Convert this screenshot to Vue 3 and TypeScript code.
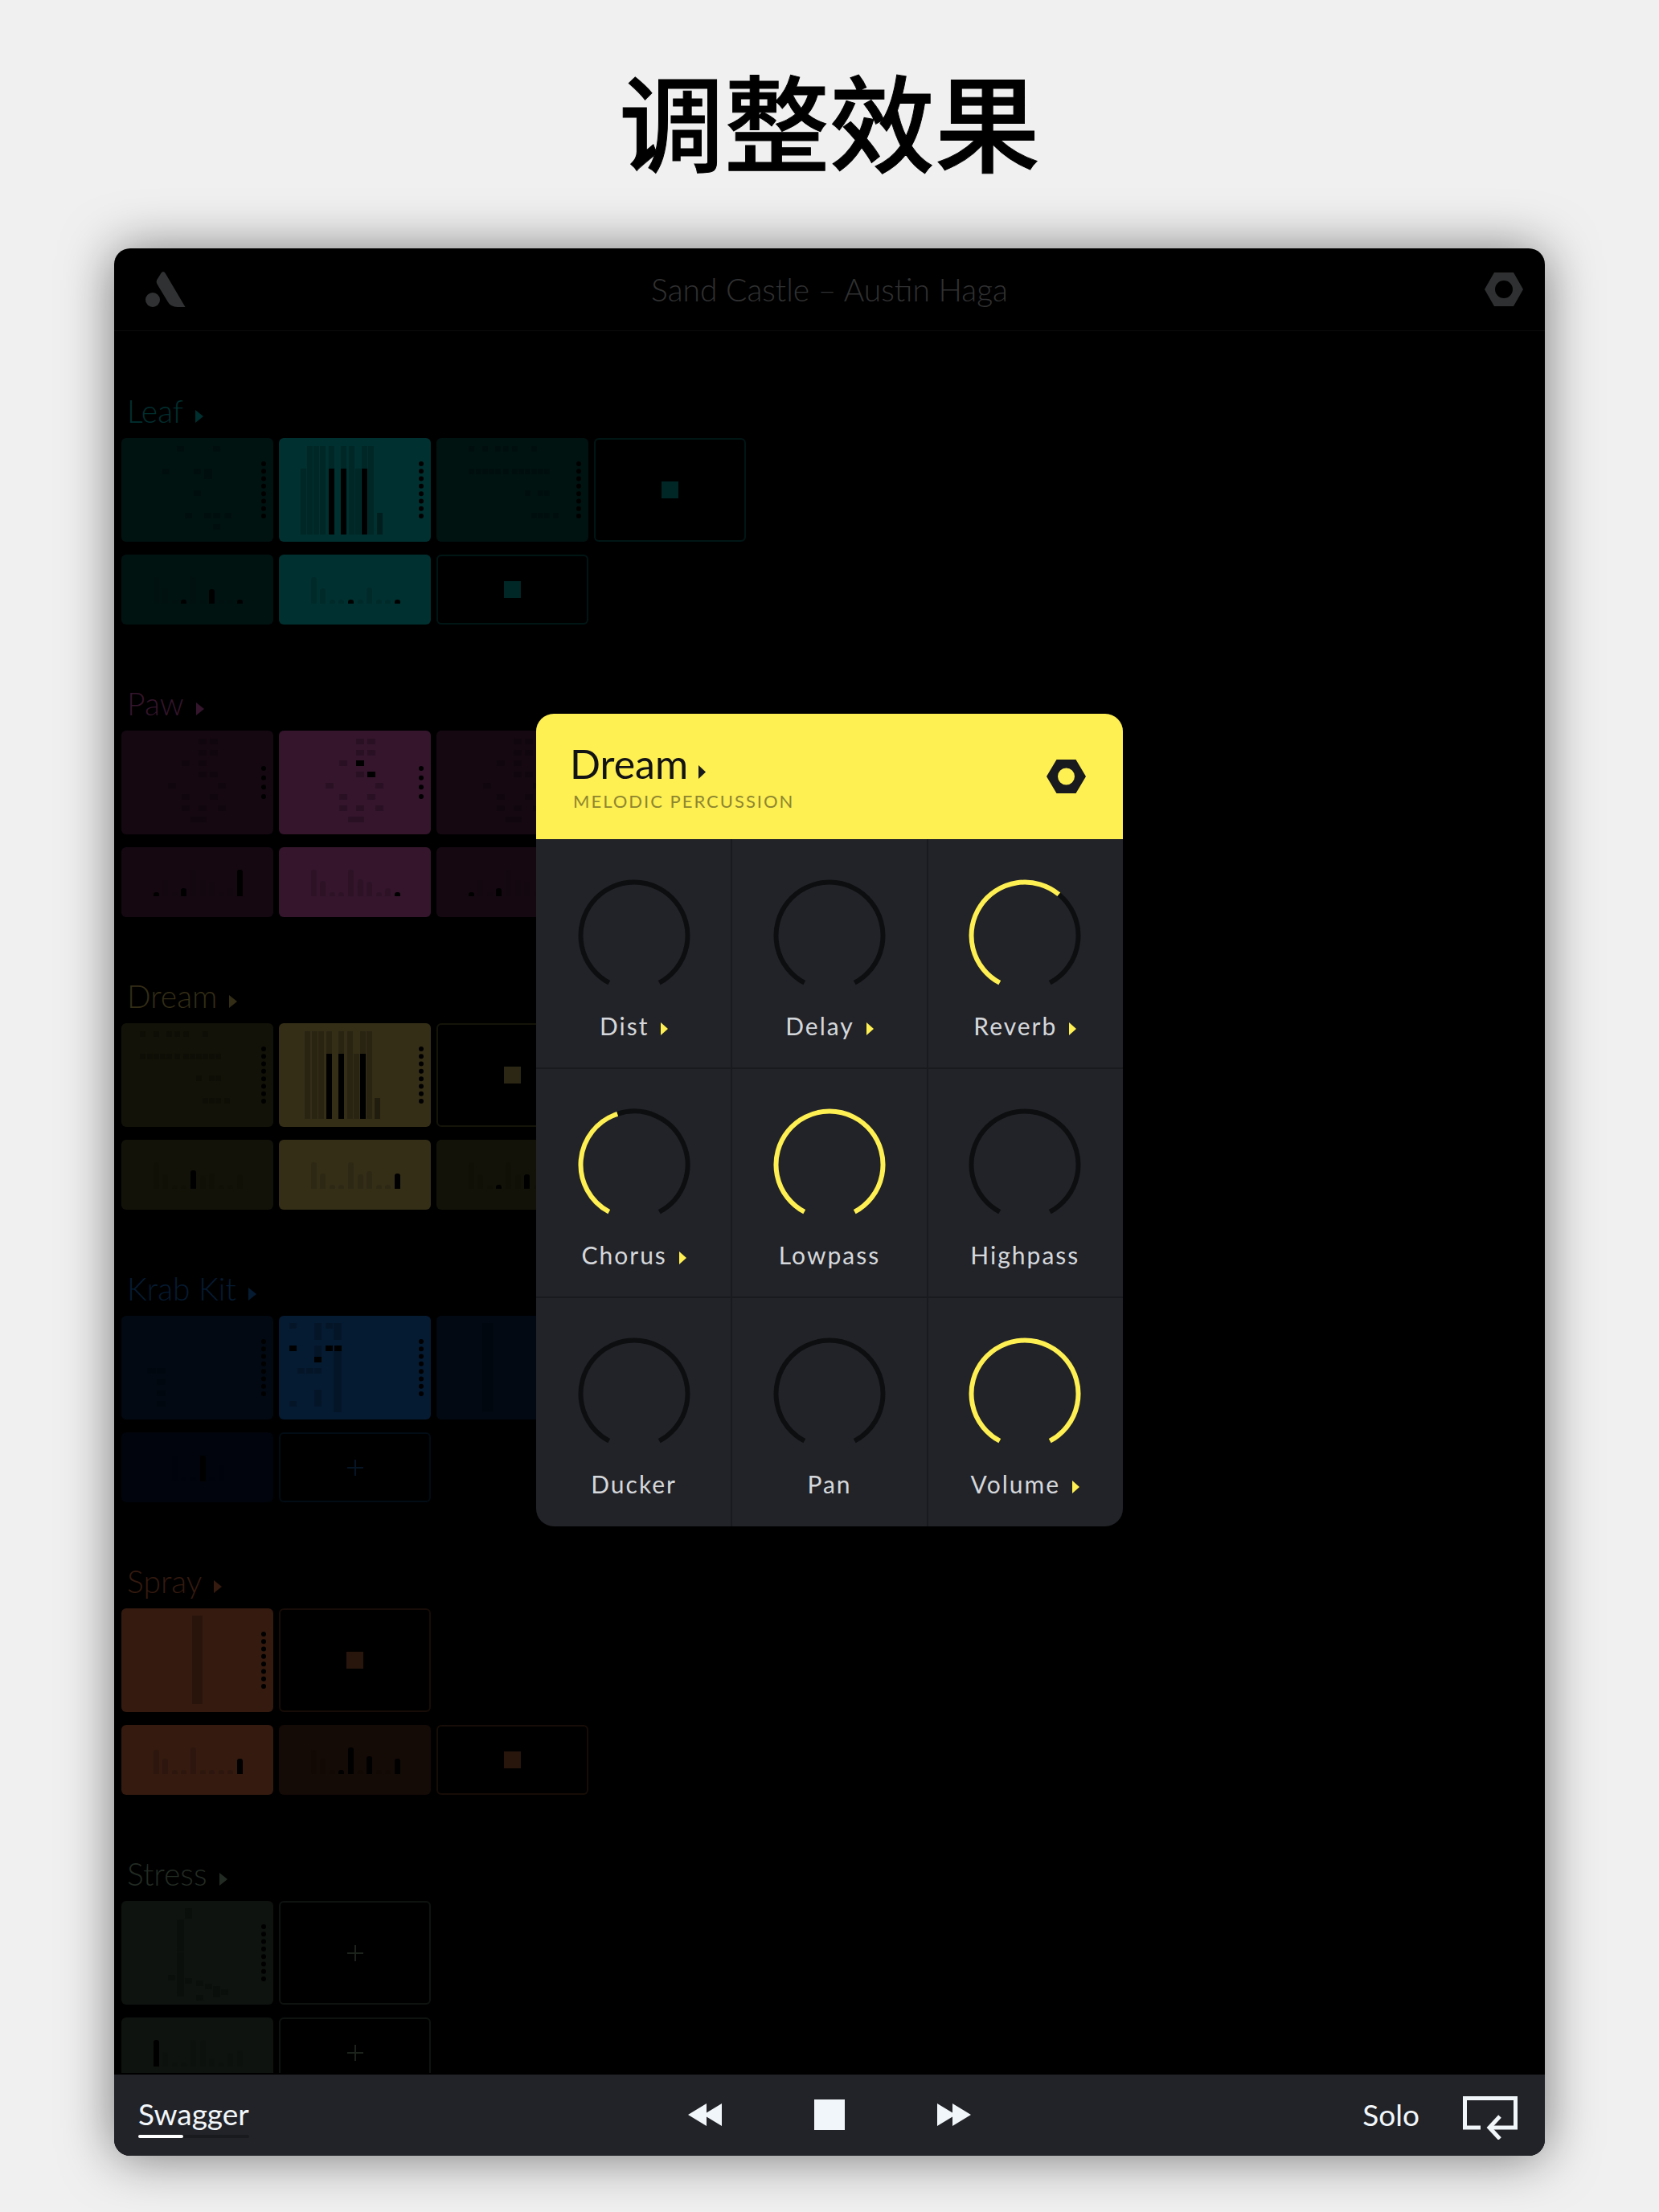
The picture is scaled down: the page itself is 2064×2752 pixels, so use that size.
<script setup lang="ts">
import { computed, ref } from 'vue'

// x, y, width, height, and an optional flag for a sounding note
type Note = [number, number, number, number, boolean?]

interface Clip {
  kind: 'notes' | 'levels' | 'stop' | 'add'
  on?: boolean
  notes?: Note[]
  dots?: number
  // bar heights; a negative height marks a bar that is sounding
  levels?: number[]
}

interface Track {
  name: string
  tone: string
  clips: Clip[]
  levels: Clip[]
}

interface Knob {
  name: string
  value: number
  automated?: boolean
}

const squares = (w: number, points: [number, number, boolean?][]): Note[] =>
  points.map(([x, y, hot]) => [x, y, w, 7, hot])

const notes = (items: Note[], on = false, dots = 8): Clip => ({ kind: 'notes', notes: items, on, dots })
const levels = (items: number[], on = false): Clip => ({ kind: 'levels', levels: items, on })
const stop: Clip = { kind: 'stop' }
const add: Clip = { kind: 'add' }

const arp = (shift: number): Note[] =>
  squares(7, [
    [23, 10], [40, 10], [56, 10], [66, 10], [77, 10], [101, 10],
    [23, 38], [32, 38], [40, 38], [48, 38], [56, 38], [66, 38],
    [77, 38], [85, 38], [93, 38], [101, 38], [109, 38], [117, 38],
    [93, 65], [109, 65], [117, 65],
    [101, 93], [109, 93], [117, 93], [128, 93],
  ]).map(([x, y, w, h]) => [x + shift, y, w, h])

const leafLead: Note[] = [
  ...squares(9, [
    [69, 10], [114, 10], [51, 38], [90, 38], [90, 65],
    [79, 93], [103, 93], [114, 93], [128, 93], [114, 107],
  ]),
  [103, 38, 10, 13],
]

const leafChords: Note[] = [
  [27, 38, 7, 82], [35, 10, 7, 110], [43, 10, 7, 110], [51, 10, 7, 110],
  [62, 10, 7, 28], [62, 38, 7, 82, true], [77, 10, 7, 28], [77, 38, 7, 82, true],
  [87, 10, 7, 110], [95, 38, 7, 82], [103, 10, 7, 28], [103, 38, 7, 82, true],
  [111, 10, 7, 110], [122, 93, 7, 27], [122, 93, 7, 27],
]

const dreamChords: Note[] = [
  [32, 10, 7, 109], [41, 10, 7, 109], [49, 10, 7, 109],
  [59, 10, 7, 28], [59, 38, 7, 81, true], [74, 10, 7, 28], [74, 38, 7, 81, true],
  [85, 10, 7, 109], [93, 38, 7, 81], [101, 10, 7, 28], [101, 38, 7, 81, true],
  [109, 10, 7, 109], [119, 93, 7, 26], [119, 93, 7, 26],
]

const paw = (hot: boolean): Note[] =>
  squares(10, [
    [96, 10], [110, 10], [96, 24], [110, 24], [75, 37], [96, 37, hot],
    [96, 51], [110, 51, hot], [58, 65], [120, 65], [75, 79], [110, 79],
    [75, 93], [96, 93], [120, 93], [86, 107], [96, 107],
  ])

const krabIntro = squares(11, [[32, 65], [44, 65], [44, 79], [44, 93], [44, 106]])

const krabBeat: Note[] = [
  ...squares(9, [
    [13, 9], [58, 9], [13, 37, true], [58, 37, true], [69, 37, true], [44, 51, true],
    [23, 65], [34, 65], [44, 65], [13, 106],
  ]),
  [44, 9, 9, 21], [68, 9, 10, 21], [44, 37, 9, 14], [68, 44, 10, 76], [44, 92, 9, 21],
]

const stressNotes: Note[] = [
  [79, 9, 9, 13], [69, 23, 9, 40], [69, 64, 9, 55], [114, 106, 9, 14],
  ...squares(9, [[58, 92], [79, 96], [93, 99], [104, 103], [124, 110], [93, 117]]),
]

const tracks: Track[] = [
  {
    name: 'Leaf',
    tone: 'leaf',
    clips: [notes(leafLead), notes(leafChords, true), notes(arp(17)), stop],
    levels: [
      levels([33, 19, 5, -5, 33, 5, -18, 5, 5, -5]),
      levels([33, 19, 5, 5, -5, 5, 20, 5, 5, -5], true),
      stop,
    ],
  },
  {
    name: 'Paw',
    tone: 'paw',
    clips: [notes(paw(false), false, 4), notes(paw(true), true, 4), notes(paw(false), false, 4)],
    levels: [
      levels([-5, 20, 5, -10, 33, 20, 18, 5, 10, -33]),
      levels([33, 19, 5, 5, 33, 21, 18, 5, 10, -5], true),
      levels([-5, 20, 5, -10, 33, 20, 18, 5, 10, -33]),
    ],
  },
  {
    name: 'Dream',
    tone: 'dream',
    clips: [notes(arp(0)), notes(dreamChords, true), stop],
    levels: [
      levels([33, 18, 5, 5, -23, 17, 20, 5, 5, 18]),
      levels([33, 19, 5, 5, 33, 18, 22, 5, 5, -19], true),
      levels([33, 18, 5, -5, 33, 18, -18, 5, 5, 5]),
    ],
  },
  {
    name: 'Krab Kit',
    tone: 'krab',
    clips: [notes(krabIntro), notes(krabBeat, true), notes([[57, 9, 13, 110]])],
    levels: [levels([0, 0, 32, 5, 5, -32, 5, 20, 0, 0]), add],
  },
  {
    name: 'Spray',
    tone: 'spray',
    clips: [notes([[88, 9, 13, 110]], true), stop],
    levels: [
      levels([30, 19, 5, 5, 33, 5, 5, 5, 5, -19], true),
      levels([30, 19, 5, -5, -33, 5, -22, 5, 5, -19]),
      stop,
    ],
  },
  {
    name: 'Stress',
    tone: 'stress',
    clips: [notes(stressNotes), add],
    levels: [levels([-33, 18, 5, 5, 33, 33, 10, 5, 17, 20]), add],
  },
]

const knobs = ref<Knob[]>([
  { name: 'Dist', value: 0, automated: true },
  { name: 'Delay', value: 0, automated: true },
  { name: 'Reverb', value: 63, automated: true },
  { name: 'Chorus', value: 44, automated: true },
  { name: 'Lowpass', value: 100 },
  { name: 'Highpass', value: 0 },
  { name: 'Ducker', value: 0 },
  { name: 'Pan', value: 0 },
  { name: 'Volume', value: 100, automated: true },
])

// The dial leaves a gap of 28 degrees on each side of its lowest point.
const RADIUS = 66.5
const point = (share: number): string => {
  const angle = ((28 + 304 * share) * Math.PI) / 180
  return `${(70 - RADIUS * Math.sin(angle)).toFixed(2)} ${(70 + RADIUS * Math.cos(angle)).toFixed(2)}`
}
const arc = (from: number, to: number): string =>
  `M${point(from)}A${RADIUS} ${RADIUS} 0 ${304 * (to - from) > 180 ? 1 : 0} 1 ${point(to)}`

const dials = computed(() =>
  knobs.value.map((k) => ({
    rest: k.value < 100 ? arc(k.value / 100, 1) : '',
    filled: k.value > 0 ? arc(0, k.value / 100) : '',
  })),
)

const barX = (i: number): number => Math.round(39.5 + 11.6 * i)
const dotY = (i: number, count: number): number =>
  count === 4 ? 47 + (35 * i) / 3 : 32 + (65 * i) / 7
</script>

<template>
  <div class="page">
    <h1 class="headline">调整效果</h1>

    <div class="device">
      <header class="topbar">
        <svg class="logo" width="50" height="44" viewBox="0 0 50 44" aria-hidden="true">
          <circle cx="9" cy="35" r="9" />
          <path d="M19 2.500Q20 0 22 0Q24 0 25 2.500L49.500 44H40Q31 44 27.500 37L14.500 15.500Q13 13 14 10.500Z" />
        </svg>
        <p class="song">Sand Castle – Austin Haga</p>
        <button class="plain nut" type="button" aria-label="Settings">
          <svg width="48" height="42" viewBox="0 0 48 42">
            <path fill-rule="evenodd" d="M12 0H36L48 21L36 42H12L0 21ZM24 10A11 11 0 1 0 24 32A11 11 0 1 0 24 10Z" />
          </svg>
        </button>
      </header>

      <main class="stage">
        <section v-for="t in tracks" :key="t.name" class="track" :class="t.tone">
          <h2 class="track-name">
            {{ t.name }}
            <svg class="arrow" width="10" height="16" viewBox="0 0 10 16" aria-hidden="true"><path d="M0 0L10 8L0 16Z" /></svg>
          </h2>
          <div class="row">
            <button
              v-for="(c, i) in t.clips"
              :key="i"
              type="button"
              class="clip tall"
              :class="[c.kind, { on: c.on }]"
              :aria-label="`${t.name} pattern ${i + 1}`"
            >
              <svg v-if="c.kind === 'notes'" width="189" height="129" viewBox="0 0 189 129">
                <rect
                  v-for="(n, k) in c.notes"
                  :key="k"
                  :x="n[0]"
                  :y="n[1]"
                  :width="n[2]"
                  :height="n[3]"
                  :class="n[4] ? 'hot' : 'cold'"
                />
                <circle v-for="d in c.dots" :key="'d' + d" cx="177" :cy="dotY(d - 1, c.dots ?? 8)" r="3" class="hot" />
              </svg>
              <svg v-else-if="c.kind === 'stop'" class="glyph" width="21" height="21" viewBox="0 0 21 21"><path d="M0 0H21V21H0Z" /></svg>
              <svg v-else class="glyph" width="20" height="20" viewBox="0 0 20 20"><path d="M9 0H11V9H20V11H11V20H9V11H0V9H9Z" /></svg>
            </button>
          </div>
          <div class="row">
            <button
              v-for="(c, i) in t.levels"
              :key="i"
              type="button"
              class="clip short"
              :class="[c.kind, { on: c.on }]"
              :aria-label="`${t.name} levels ${i + 1}`"
            >
              <svg v-if="c.kind === 'levels'" width="189" height="87" viewBox="0 0 189 87">
                <path
                  v-for="(h, k) in c.levels"
                  :key="k"
                  :d="h ? `M${barX(k)} 61v${3 - Math.abs(h)}q0 -3 3 -3h1q3 0 3 3v${Math.abs(h) - 3}z` : ''"
                  :class="h < 0 ? 'hot' : 'cold'"
                />
              </svg>
              <svg v-else-if="c.kind === 'stop'" class="glyph" width="21" height="21" viewBox="0 0 21 21"><path d="M0 0H21V21H0Z" /></svg>
              <svg v-else class="glyph" width="20" height="20" viewBox="0 0 20 20"><path d="M9 0H11V9H20V11H11V20H9V11H0V9H9Z" /></svg>
            </button>
          </div>
        </section>
      </main>

      <footer class="transport">
        <div class="scene">
          <button class="plain scene-name" type="button">Swagger</button>
          <div class="progress" role="progressbar" aria-label="Swagger" aria-valuenow="41"><i></i></div>
        </div>
        <div class="controls">
          <button class="plain" type="button" aria-label="Previous">
            <svg width="42" height="28" viewBox="0 0 42 28"><path d="M0 14L23 0V11.500L42 0V28L23 16.500V28Z" /></svg>
          </button>
          <button class="plain" type="button" aria-label="Stop">
            <svg width="38" height="38" viewBox="0 0 38 38"><path d="M0 0H38V38H0Z" /></svg>
          </button>
          <button class="plain" type="button" aria-label="Next">
            <svg width="42" height="28" viewBox="0 0 42 28"><path d="M42 14L19 0V11.500L0 0V28L19 16.500V28Z" /></svg>
          </button>
        </div>
        <div class="modes">
          <button class="plain" type="button">Solo</button>
          <button class="plain" type="button" aria-label="Loop">
            <svg class="loop" width="68" height="54" viewBox="0 0 68 54">
              <path d="M22 39H2.500V2.500H65.500V39H33" />
              <path d="M46 25L33 39L46 53" />
            </svg>
          </button>
        </div>
      </footer>

      <div class="overlay">
        <section class="panel" role="dialog" aria-label="Dream">
          <header class="panel-head">
            <div>
              <h2 class="panel-title">
                Dream
                <svg width="9" height="17" viewBox="0 0 9 17" aria-hidden="true"><path d="M0 0L9 8.500L0 17Z" /></svg>
              </h2>
              <p class="panel-kind">MELODIC PERCUSSION</p>
            </div>
            <button class="plain" type="button" aria-label="Instrument settings">
              <svg width="49" height="42" viewBox="0 0 49 42">
                <path fill-rule="evenodd" d="M12.500 0H36.500L49 21L36.500 42H12.500L0 21ZM24.500 10.500A10.500 10.500 0 1 0 24.500 31.500A10.500 10.500 0 1 0 24.500 10.500Z" />
              </svg>
            </button>
          </header>
          <div class="knobs">
            <label v-for="(k, i) in knobs" :key="k.name" class="knob">
              <span class="dial">
                <svg width="140" height="140" viewBox="0 0 140 140" aria-hidden="true">
                  <path v-if="dials[i].rest" class="rest" :d="dials[i].rest" />
                  <path v-if="dials[i].filled" class="filled" :d="dials[i].filled" />
                </svg>
                <input v-model.number="k.value" class="range" type="range" min="0" max="100" />
              </span>
              <span class="knob-name">
                {{ k.name }}
                <svg v-if="k.automated" width="9" height="16" viewBox="0 0 9 16" aria-hidden="true"><path d="M0 0L9 8L0 16Z" /></svg>
              </span>
            </label>
          </div>
        </section>
      </div>
    </div>
  </div>
</template>

<style>
body {
  margin: 0;
  background: #f0f0f0;
}
</style>

<style scoped>
.page {
  box-sizing: border-box;
  height: 100vh;
  padding: 67px 142px 70px;
  display: flex;
  flex-direction: column;
  font-family: Lato, 'Noto Sans CJK SC', sans-serif;
  background: #f0f0f0;
}

.page svg {
  display: block;
  flex: none;
}

h1,
h2,
p {
  margin: 0;
}

.plain {
  display: block;
  padding: 0;
  border: 0;
  background: none;
  font: inherit;
  color: inherit;
}

.headline {
  margin-bottom: 82px;
  font-family: 'Noto Sans CJK SC', sans-serif;
  font-size: 131px;
  font-weight: 500;
  line-height: 160px;
  text-align: center;
  color: #000;
  -webkit-text-stroke: 1px #000;
}

.device {
  position: relative;
  flex: 1;
  min-height: 0;
  display: flex;
  flex-direction: column;
  border-radius: 20px;
  background: #000;
  box-shadow: 0 2px 64px rgba(0, 0, 0, 0.5);
}

.topbar {
  box-sizing: border-box;
  height: 103px;
  padding: 0 27px;
  display: grid;
  grid-template-columns: 1fr auto 1fr;
  align-items: center;
  border-bottom: 1px solid #0c0c0d;
  color: #303132;
}

.logo {
  margin-left: 12px;
  fill: #303132;
}

.song {
  font-size: 39px;
  font-weight: 300;
  line-height: 48px;
}

.nut {
  justify-self: end;
  fill: #2f3031;
}

.stage {
  flex: 1;
  min-height: 0;
  margin-bottom: 2px;
  padding: 76px 9px 0;
  display: flex;
  flex-direction: column;
  gap: 75px;
  overflow: hidden;
}

.track {
  flex: none;
}

.track-name {
  display: flex;
  align-items: baseline;
  gap: 15px;
  margin-bottom: 11px;
  padding-left: 7px;
  font-size: 39px;
  font-weight: 300;
  line-height: 46px;
  color: var(--ink);
}

.arrow {
  margin-bottom: 2px;
  fill: var(--ink);
}

.row {
  display: flex;
  gap: 7px;
}

.row + .row {
  margin-top: 16px;
}

.clip {
  box-sizing: border-box;
  width: 189px;
  padding: 0;
  display: flex;
  align-items: center;
  justify-content: center;
  border: 0;
  border-radius: 6px;
  background: var(--dim);
}

.tall {
  height: 129px;
}

.short {
  height: 87px;
}

.on {
  background: var(--bright);
}

.stop,
.add {
  border: 2px solid var(--line);
  background: none;
}

.glyph {
  fill: var(--glyph);
}

.hot {
  fill: #000;
}

.cold {
  fill: rgba(0, 0, 0, 0.2);
}

.levels .cold {
  fill: rgba(0, 0, 0, 0.06);
}

.levels.on .cold {
  fill: rgba(0, 0, 0, 0.12);
}

.leaf {
  --ink: #002f2f;
  --bright: #003030;
  --dim: #001311;
  --line: #001615;
  --glyph: #002626;
}

.paw {
  --ink: #34152c;
  --bright: #34152c;
  --dim: #150811;
  --line: #150811;
  --glyph: #281022;
}

.dream {
  --ink: #332d16;
  --bright: #342e17;
  --dim: #131208;
  --line: #151409;
  --glyph: #2b2714;
}

.krab {
  --ink: #051b32;
  --bright: #051b32;
  --dim: #020912;
  --line: #020c14;
  --glyph: #051526;
}

.krab .short.levels {
  background: #01040c;
}

.spray {
  --ink: #341a0f;
  --bright: #341a0f;
  --dim: #140a06;
  --line: #170c07;
  --glyph: #28160d;
}

.stress {
  --ink: #222b23;
  --bright: #222b23;
  --dim: #0e130f;
  --line: #0e1310;
  --glyph: #1b231c;
}

.transport {
  box-sizing: border-box;
  height: 101px;
  padding: 0 30px 2px;
  display: grid;
  grid-template-columns: 1fr auto 1fr;
  align-items: center;
  border-radius: 0 0 20px 20px;
  background: #222328;
  color: #f1f6fa;
  fill: #f1f6fa;
  font-size: 37px;
  line-height: 44px;
}

.scene {
  justify-self: start;
  padding-top: 6px;
}

.progress {
  margin-top: 4px;
  border-radius: 2px;
  background: #191a1d;
}

.progress i {
  display: block;
  width: 41%;
  height: 4px;
  border-radius: 2px;
  background: #fff;
}

.controls {
  display: flex;
  align-items: center;
  gap: 115px;
}

.modes {
  justify-self: end;
  margin-right: 4px;
  display: flex;
  align-items: center;
  gap: 54px;
}

.loop {
  margin-top: 8px;
  fill: none;
  stroke: #f1f6fa;
  stroke-width: 5;
}

.overlay {
  position: absolute;
  inset: 0;
  padding-bottom: 204px;
  display: flex;
  align-items: center;
  justify-content: center;
}

.panel {
  width: 730px;
  border-radius: 22px;
  overflow: hidden;
  background: #222328;
}

.panel-head {
  box-sizing: border-box;
  height: 156px;
  padding: 0 46px 0 42px;
  display: flex;
  align-items: center;
  justify-content: space-between;
  background: #feef52;
  color: #121315;
  fill: #191a1e;
}

.panel-title {
  display: flex;
  align-items: baseline;
  gap: 13px;
  font-size: 50px;
  font-weight: 400;
  line-height: 56px;
}

.panel-title svg {
  margin-bottom: 6px;
}

.panel-kind {
  margin: 6px 0 0 4px;
  font-size: 22px;
  line-height: 26px;
  letter-spacing: 2px;
  color: #8e862f;
}

.knobs {
  display: grid;
  grid-template-columns: repeat(3, 1fr);
  grid-auto-rows: 285px;
  overflow: hidden;
}

.knob {
  box-sizing: border-box;
  padding-top: 50px;
  display: flex;
  flex-direction: column;
  align-items: center;
  gap: 24px;
  box-shadow: 0 0 0 1px #191a1e;
}

.dial {
  position: relative;
}

.dial path {
  fill: none;
  stroke-width: 6;
}

.rest {
  stroke: #0d0e0f;
}

.filled {
  stroke: #feef52;
}

.range {
  position: absolute;
  inset: 0;
  width: 100%;
  height: 100%;
  margin: 0;
  opacity: 0;
}

.knob-name {
  display: flex;
  align-items: baseline;
  gap: 15px;
  font-size: 30px;
  font-weight: 400;
  line-height: 36px;
  letter-spacing: 2px;
  color: #d4d7db;
  fill: #feef52;
}

.knob-name svg {
  margin-bottom: 2px;
}
</style>
